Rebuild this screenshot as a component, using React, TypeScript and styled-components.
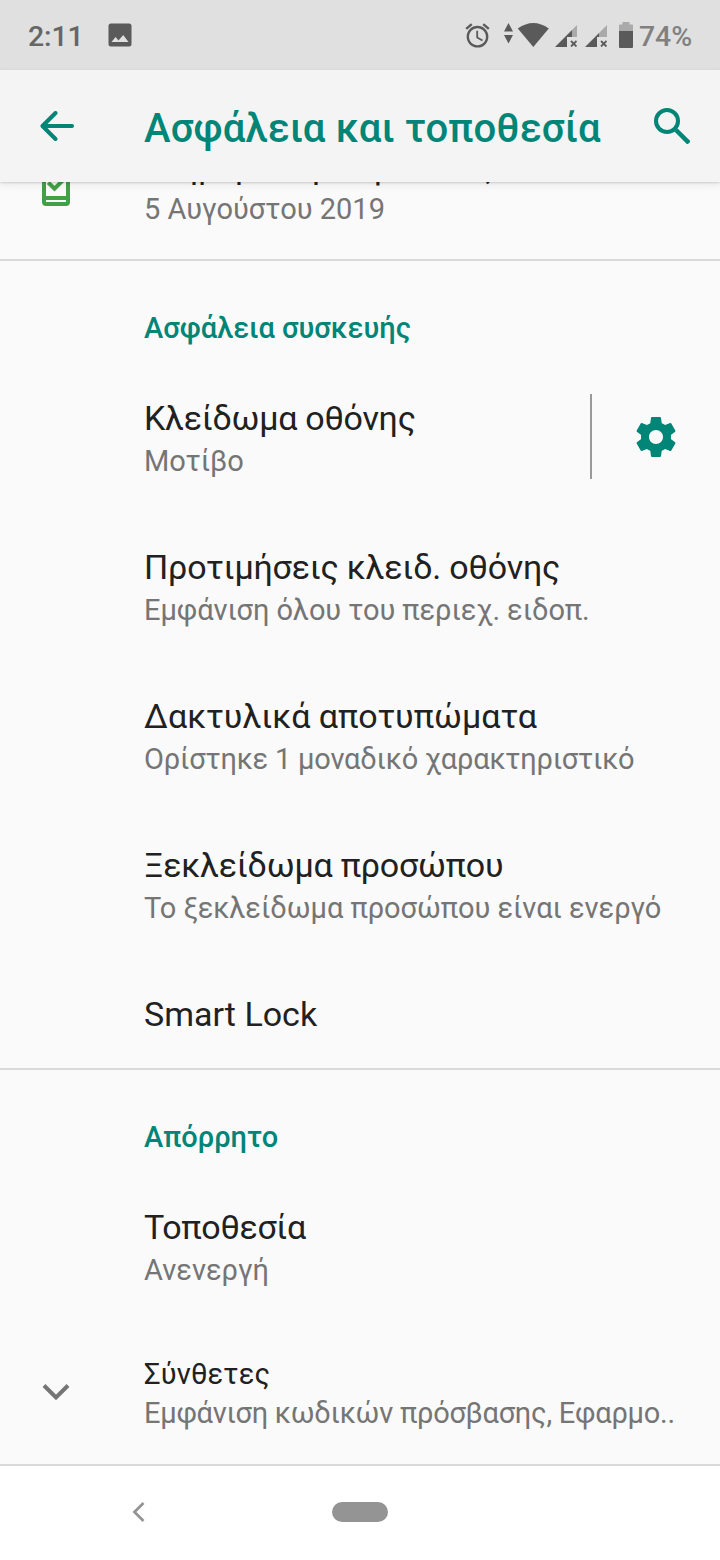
import React from 'react';
import styled, { createGlobalStyle } from 'styled-components';

const GlobalStyle = createGlobalStyle`
  *, *::before, *::after { box-sizing: border-box; }
  html, body { margin: 0; padding: 0; background: #fafafa; }
  body { font-family: Roboto, "Noto Sans", sans-serif; }
  svg { display: block; flex: none; }
  button { border: 0; padding: 0; background: none; font: inherit; }
`;

const Screen = styled.div`
  width: 720px;
  height: 1560px;
  display: flex;
  flex-direction: column;
  overflow: hidden;
  background: #fafafa;
`;

const StatusBar = styled.header`
  height: 70px;
  flex: none;
  display: flex;
  align-items: center;
  padding: 2px 28px 0;
  background: #e0e0e0;
  color: #5a5a5a;
`;

const Clock = styled.span`
  width: 80px;
  font-size: 28.5px;
  font-weight: 500;
  letter-spacing: -0.1px;
  color: #666;
`;

const StatusIcons = styled.div`
  margin-left: auto;
  display: flex;
  align-items: center;
`;

const BatteryLevel = styled.span`
  width: 53px;
  margin-left: 6px;
  font-size: 28.5px;
  font-weight: 500;
  letter-spacing: -0.1px;
  color: #808080;
`;

const AppBar = styled.div`
  position: relative;
  z-index: 1;
  height: 112px;
  flex: none;
  display: flex;
  align-items: center;
  background: #f4f4f4;
  color: #008577;
  box-shadow: 0 1px 2px rgba(0, 0, 0, 0.14), 0 3px 8px rgba(0, 0, 0, 0.07);
`;

const BarButton = styled.button<{ $width: number }>`
  width: ${(p) => p.$width}px;
  height: 112px;
  flex: none;
  display: flex;
  align-items: center;
  justify-content: center;
  color: inherit;
`;

const ScreenTitle = styled.h1`
  flex: 1;
  margin: 6px 0 0 30px;
  font-size: 40px;
  font-weight: 500;
  line-height: 48px;
  letter-spacing: 0.14px;
  white-space: nowrap;
`;

const List = styled.main`
  flex: none;
  height: 1284px;
  overflow: hidden;
`;

const Section = styled.section<{ $scrolled?: boolean }>`
  margin-top: ${(p) => (p.$scrolled ? '-72px' : '0')};
  border-bottom: 2px solid #dadada;
`;

const SectionTitle = styled.h2`
  height: 101px;
  margin: 0;
  padding: 50px 0 0 144px;
  font-size: 29px;
  font-weight: 500;
  line-height: 34px;
  color: #008577;
`;

const Row = styled.div<{ $height?: number }>`
  height: ${(p) => p.$height ?? 149}px;
  display: flex;
  align-items: center;
`;

const IconSlot = styled.div`
  width: 144px;
  flex: none;
  padding: 0 0 1px 32px;
`;

const RowText = styled.div<{ $single: boolean }>`
  flex: 1;
  min-width: 0;
  padding-top: ${(p) => (p.$single ? 2 : 4)}px;
`;

const RowTitle = styled.div<{ $small?: boolean; $tracking: number }>`
  font-size: ${(p) => (p.$small ? 29 : 34)}px;
  line-height: ${(p) => (p.$small ? 38 : 45)}px;
  letter-spacing: ${(p) => p.$tracking}px;
  color: #212121;
  white-space: nowrap;
`;

const RowSummary = styled.div<{ $tracking: number }>`
  font-size: 29px;
  line-height: 40px;
  letter-spacing: ${(p) => p.$tracking}px;
  color: #757575;
  white-space: nowrap;
`;

const RowAction = styled.button`
  width: 130px;
  height: 85px;
  flex: none;
  display: flex;
  align-items: center;
  justify-content: center;
  border-left: 2px solid #999;
  color: #008577;
`;

const NavBar = styled.nav`
  flex: 1;
  display: flex;
  align-items: center;
  padding: 0 0 2px 131px;
  background: #fff;
  color: #949494;
`;

const HomePill = styled.div`
  width: 56px;
  height: 20px;
  margin-left: 185px;
  border-radius: 10px;
  background: #949494;
`;

const PictureIcon = () => (
  <svg width="24" height="24" viewBox="0 0 24 24" fill="currentColor">
    <path fillRule="evenodd" d="M3 .5h18A2.500 2.500 0 0 1 23.500 3v18a2.500 2.500 0 0 1-2.500 2.500H3A2.500 2.500 0 0 1 .5 21V3A2.500 2.500 0 0 1 3 .5zM3.500 19h17l-5.300-7-4.700 5.400L7.600 14z" />
  </svg>
);

const AlarmIcon = () => (
  <svg width="29" height="29" viewBox="0 0 24 24" fill="currentColor">
    <path d="M22 5.720l-4.600-3.860-1.290 1.530 4.600 3.860L22 5.720zM7.880 3.390L6.600 1.860 2 5.710l1.290 1.530 4.590-3.850zM12.500 8H11v6l4.750 2.850.75-1.230-4-2.370V8zM12 4c-4.970 0-9 4.030-9 9s4.020 9 9 9a9 9 0 0 0 0-18zm0 16c-3.870 0-7-3.130-7-7s3.130-7 7-7 7 3.130 7 7-3.130 7-7 7z" />
  </svg>
);

const WifiIcon = () => (
  <svg width="46" height="26" viewBox="0 0 46 26" fill="currentColor">
    <path d="M1 9.500h9L5.500 1zM1 13h9L5.500 21.500z" />
    <path d="M14.800 6.500Q30.300-4.500 45.800 6.500L30.300 25z" />
  </svg>
);

const SignalIcon = ({ level }: { level: number }) => (
  <svg width="22" height="22" viewBox="0 0 22 22" fill="currentColor">
    <path opacity=".4" d={`M22 0v12H${level}V${22 - level}z`} />
    <path d={`M0 22L${level} ${22 - level}V12H12v10z`} />
    <path d="M16 16l5.500 5.500M21.500 16L16 21.500" stroke="currentColor" strokeWidth="1.800" fill="none" />
  </svg>
);

const BatteryIcon = () => (
  <svg width="14" height="26" viewBox="0 0 14 26" fill="currentColor">
    <path opacity=".4" d="M3.500 0h7v2.500H13a1 1 0 0 1 1 1V9H0V3.500a1 1 0 0 1 1-1h2.500z" />
    <path d="M0 9h14v16a1 1 0 0 1-1 1H1a1 1 0 0 1-1-1z" />
  </svg>
);

const BackArrowIcon = () => (
  <svg width="34" height="30" viewBox="0 0 34 30" fill="none" stroke="currentColor" strokeWidth="4">
    <path d="M32 15H3" strokeLinecap="round" />
    <path d="M15.500 2L2.500 15l13 13" strokeLinecap="round" strokeLinejoin="round" />
  </svg>
);

const SearchIcon = () => (
  <svg width="36" height="36" viewBox="0 0 36 36" fill="none" stroke="currentColor" strokeWidth="4">
    <circle cx="13" cy="13" r="11" />
    <path d="M22 22l13 13" strokeWidth="4.500" />
  </svg>
);

const UpdateOkIcon = () => (
  <svg width="48" height="48" viewBox="0 0 48 48" fill="none" stroke="#43a047" strokeWidth="4">
    <rect x="12" y="4" width="24" height="40" rx="2" />
    <path d="M12 38h24M12 9h24" />
    <path d="M16.300 22.500l6.200 6.200 8.700-8.700" />
  </svg>
);

const GearIcon = () => (
  <svg width="48" height="48" viewBox="0 0 24 24" fill="currentColor">
    <path d="M19.430 12.980c.04-.32.070-.64.070-.98s-.03-.66-.07-.98l2.110-1.650c.19-.15.24-.42.12-.64l-2-3.460c-.12-.22-.39-.3-.61-.22l-2.490 1c-.52-.4-1.080-.73-1.690-.98l-.38-2.650C14.460 2.180 14.250 2 14 2h-4c-.25 0-.46.18-.49.42l-.38 2.650c-.61.25-1.170.59-1.690.98l-2.490-1c-.23-.09-.49 0-.61.22l-2 3.460c-.13.22-.07.49.12.64l2.110 1.650c-.04.32-.07.65-.07.98s.03.66.07.98l-2.110 1.650c-.19.15-.24.42-.12.64l2 3.460c.12.22.39.3.61.22l2.490-1c.52.4 1.080.73 1.690.98l.38 2.650c.03.24.24.42.49.42h4c.25 0 .46-.18.49-.42l.38-2.650c.61-.25 1.170-.59 1.690-.98l2.490 1c.23.09.49 0 .61-.22l2-3.460c.12-.22.07-.49-.12-.64l-2.110-1.650zM12 15.500c-1.930 0-3.500-1.570-3.500-3.500s1.570-3.500 3.500-3.500 3.500 1.570 3.500 3.500-1.570 3.500-3.500 3.500z" />
  </svg>
);

const ChevronDownIcon = () => (
  <svg width="48" height="48" viewBox="0 0 48 48" fill="none" stroke="#757575" strokeWidth="4">
    <path d="M12 17.500l12 12 12-12" />
  </svg>
);

const ChevronLeftIcon = () => (
  <svg width="16" height="20" viewBox="0 0 16 20" fill="none" stroke="currentColor" strokeWidth="2.800">
    <path d="M12.500 1L3.500 10l9 9" />
  </svg>
);

type PreferenceProps = {
  title: string;
  summary?: string;
  icon?: React.ReactNode;
  action?: React.ReactNode;
  height?: number;
  small?: boolean;
  titleTracking?: number;
  summaryTracking?: number;
};

const Preference = ({
  title,
  summary,
  icon,
  action,
  height,
  small,
  titleTracking = 0,
  summaryTracking = 0,
}: PreferenceProps) => (
  <Row $height={height}>
    <IconSlot>{icon}</IconSlot>
    <RowText $single={!summary}>
      <RowTitle $small={small} $tracking={titleTracking}>{title}</RowTitle>
      {summary && <RowSummary $tracking={summaryTracking}>{summary}</RowSummary>}
    </RowText>
    {action && <RowAction aria-label="Ρυθμίσεις">{action}</RowAction>}
  </Row>
);

const Picture = styled.div`
  margin-top: -2px;
`;

const Alarm = styled.div`
  margin: -2px 11px 0 0;
`;

const Wifi = styled.div`
  margin: -2px 6px 0 0;
`;

const Signal = styled.div`
  margin-right: 8px;
`;

const Battery = styled.div`
  margin: -2px 0 0 4px;
`;

export default function App() {
  return (
    <Screen>
      <GlobalStyle />
      <StatusBar>
        <Clock>2:11</Clock>
        <Picture><PictureIcon /></Picture>
        <StatusIcons>
          <Alarm><AlarmIcon /></Alarm>
          <Wifi><WifiIcon /></Wifi>
          <Signal><SignalIcon level={17} /></Signal>
          <Signal><SignalIcon level={14} /></Signal>
          <Battery><BatteryIcon /></Battery>
          <BatteryLevel>74%</BatteryLevel>
        </StatusIcons>
      </StatusBar>
      <AppBar>
        <BarButton $width={114} aria-label="Πίσω"><BackArrowIcon /></BarButton>
        <ScreenTitle>Ασφάλεια και τοποθεσία</ScreenTitle>
        <BarButton $width={96} aria-label="Αναζήτηση"><SearchIcon /></BarButton>
      </AppBar>
      <List>
        <Section $scrolled>
          <Preference
            icon={<UpdateOkIcon />}
            title="Ενημέρωση ασφαλείας"
            titleTracking={-0.25}
            summary="5 Αυγούστου 2019"
          />
        </Section>
        <Section>
          <SectionTitle>Ασφάλεια συσκευής</SectionTitle>
          <Preference title="Κλείδωμα οθόνης" titleTracking={-0.27} summary="Μοτίβο" action={<GearIcon />} />
          <Preference
            title="Προτιμήσεις κλειδ. οθόνης"
            titleTracking={-0.18}
            summary="Εμφάνιση όλου του περιεχ. ειδοπ."
            summaryTracking={-0.07}
          />
          <Preference
            title="Δακτυλικά αποτυπώματα"
            summary="Ορίστηκε 1 μοναδικό χαρακτηριστικό"
            summaryTracking={-0.21}
          />
          <Preference
            title="Ξεκλείδωμα προσώπου"
            titleTracking={-0.22}
            summary="Το ξεκλείδωμα προσώπου είναι ενεργό"
            summaryTracking={-0.05}
          />
          <Preference title="Smart Lock" height={110} />
        </Section>
        <Section>
          <SectionTitle>Απόρρητο</SectionTitle>
          <Preference title="Τοποθεσία" titleTracking={-0.33} summary="Ανενεργή" />
          <Preference
            small
            height={144}
            icon={<ChevronDownIcon />}
            title="Σύνθετες"
            titleTracking={0.15}
            summary="Εμφάνιση κωδικών πρόσβασης, Εφαρμο.."
            summaryTracking={-0.25}
          />
        </Section>
      </List>
      <NavBar>
        <ChevronLeftIcon />
        <HomePill />
      </NavBar>
    </Screen>
  );
}
